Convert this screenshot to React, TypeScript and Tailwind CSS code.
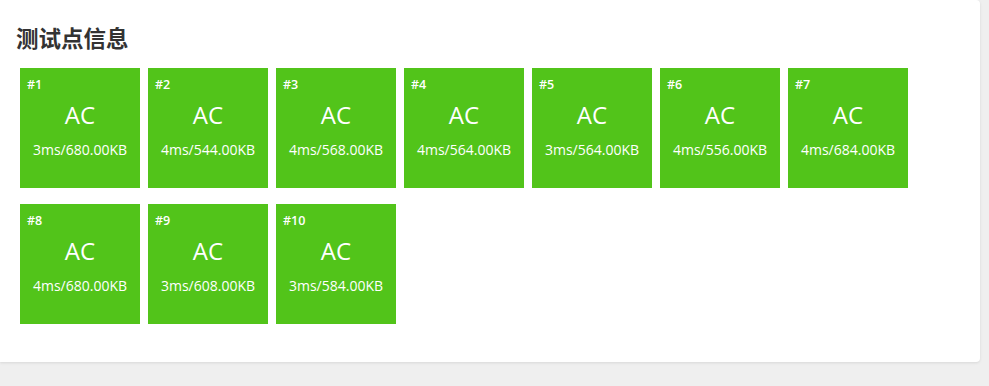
const cases = [
  { id: 1, time: 3, mem: '680.00' },
  { id: 2, time: 4, mem: '544.00' },
  { id: 3, time: 4, mem: '568.00' },
  { id: 4, time: 4, mem: '564.00' },
  { id: 5, time: 3, mem: '564.00' },
  { id: 6, time: 4, mem: '556.00' },
  { id: 7, time: 4, mem: '684.00' },
  { id: 8, time: 4, mem: '680.00' },
  { id: 9, time: 3, mem: '608.00' },
  { id: 10, time: 3, mem: '584.00' },
]

const CaseTile = ({ id, time, mem }: { id: number; time: number; mem: string }) => (
  <div className="w-[120px] h-[120px] bg-[#52c41a] text-white flex flex-col pt-[8px] px-[7px]">
    <div className="text-[12.5px] leading-[18px] font-semibold">#{id}</div>
    <div className="mt-[5px] text-[24px] leading-[32px] text-center">AC</div>
    <div className="mt-[9px] text-[14px] leading-[20px] text-center">
      {time}ms/{mem}KB
    </div>
  </div>
)

export default function App() {
  return (
    <div
      className="w-full h-[386px] bg-[#efefef] overflow-hidden"
      style={{ fontFamily: '"Open Sans", "Noto Sans CJK SC", sans-serif' }}
    >
      <div className="w-[980px] h-[362px] bg-white rounded-r-[4px] shadow-[0_1px_3px_rgba(0,0,0,0.1)] pt-[24px] pl-[16px]">
        <h2 className="text-[22.5px] leading-[30px] font-bold text-[#333]">测试点信息</h2>
        <div className="mt-[14px] pl-[4px] w-[900px] flex flex-wrap gap-x-[8px] gap-y-[16px]">
          {cases.map((c) => (
            <CaseTile key={c.id} {...c} />
          ))}
        </div>
      </div>
    </div>
  )
}
